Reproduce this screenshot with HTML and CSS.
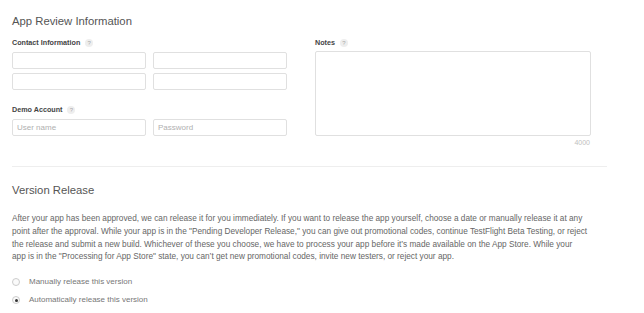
FILE: index.html
```html
<!DOCTYPE html>
<html lang="en">
<head>
    <meta charset="UTF-8">
    <title>App Review Information</title>
    <link rel="stylesheet" href="styles.css">
</head>
<body>

    <div class="page">

        <h2 class="section-title">App Review Information</h2>

        <div class="review-grid">
            <div class="col">
                <div class="label">Contact Information <span class="help">?</span></div>
                <div class="input-row">
                    <input type="text" class="field">
                    <input type="text" class="field">
                </div>
                <div class="input-row">
                    <input type="text" class="field">
                    <input type="text" class="field">
                </div>

                <div class="label demo">Demo Account <span class="help">?</span></div>
                <div class="input-row">
                    <input type="text" class="field" placeholder="User name">
                    <input type="password" class="field" placeholder="Password">
                </div>
            </div>

            <div class="col notes-col">
                <div class="label">Notes <span class="help">?</span></div>
                <textarea class="notes"></textarea>
                <div class="counter">4000</div>
            </div>
        </div>

        <hr class="divider">

        <h2 class="section-title">Version Release</h2>

        <p class="desc">After your app has been approved, we can release it for you immediately. If you want to release the app yourself, choose a date or manually release it at any point after the approval. While your app is in the "Pending Developer Release," you can give out promotional codes, continue TestFlight Beta Testing, or reject the release and submit a new build. Whichever of these you choose, we have to process your app before it’s made available on the App Store. While your app is in the "Processing for App Store" state, you can’t get new promotional codes, invite new testers, or reject your app.</p>

        <div class="options">
            <label class="option"><span class="radio"></span>Manually release this version</label>
            <label class="option"><span class="radio checked"></span>Automatically release this version</label>
        </div>

    </div>

</body>
</html>
```

FILE: styles.css
```css
body{
    margin: 0;
    background: white;
    font-family: "Liberation Sans", Arial, sans-serif;
    color: #555;
}
.page
{
    width: 595px;
    padding: 12px 0 0 12px;
}
.section-title
{
    margin: 0;
    font-size: 11.3px;
    font-weight: normal;
    color: #555;
    line-height: 18px;
}
.review-grid
{
    display: flex;
    gap: 27px;
    margin-top: 8px;
}
.col
{
    width: 276px;
}
.label
{
    font-size: 7.2px;
    font-weight: bold;
    color: #444;
    line-height: 10px;
    display: flex;
    align-items: center;
    gap: 5px;
}
.label.demo
{
    margin-top: 15px;
}
.help
{
    width: 8px;
    height: 8px;
    border-radius: 50%;
    background: #eee;
    color: #aaa;
    font-size: 6px;
    font-weight: normal;
    display: inline-flex;
    align-items: center;
    justify-content: center;
}
.input-row
{
    display: flex;
    gap: 7px;
    margin-top: 4px;
}
.field
{
    box-sizing: border-box;
    width: 134px;
    height: 17px;
    border: 1px solid #e0e0e0;
    border-radius: 2px;
    padding: 0 4px;
    font-family: inherit;
    font-size: 8px;
    color: #555;
    outline: none;
}
.field::placeholder
{
    color: #b0b0b0;
}
.notes-col
{
    display: flex;
    flex-direction: column;
}
.notes
{
    box-sizing: border-box;
    width: 276px;
    height: 85px;
    margin-top: 3px;
    border: 1px solid #e0e0e0;
    border-radius: 2px;
    resize: none;
    outline: none;
}
.counter
{
    width: 275px;
    text-align: right;
    font-size: 7px;
    color: #c0c0c0;
    margin-top: 3px;
}
.divider
{
    border: none;
    border-top: 1px solid #eee;
    margin: 20px 0 14px 0;
}
.desc
{
    width: 576px;
    font-size: 8.25px;
    line-height: 12.8px;
    color: #666;
    margin: 14px 0 0 0;
}
.options
{
    display: flex;
    flex-direction: column;
    gap: 8px;
    margin-top: 13px;
}
.option
{
    display: flex;
    align-items: center;
    gap: 9px;
    font-size: 8px;
    color: #777;
    line-height: 10px;
}
.radio
{
    box-sizing: border-box;
    width: 8px;
    height: 8px;
    border-radius: 50%;
    border: 1px solid #ccc;
    background: #fafafa;
    display: inline-flex;
    align-items: center;
    justify-content: center;
}
.radio.checked::after
{
    content: "";
    width: 3px;
    height: 3px;
    border-radius: 50%;
    background: #333;
}
```
